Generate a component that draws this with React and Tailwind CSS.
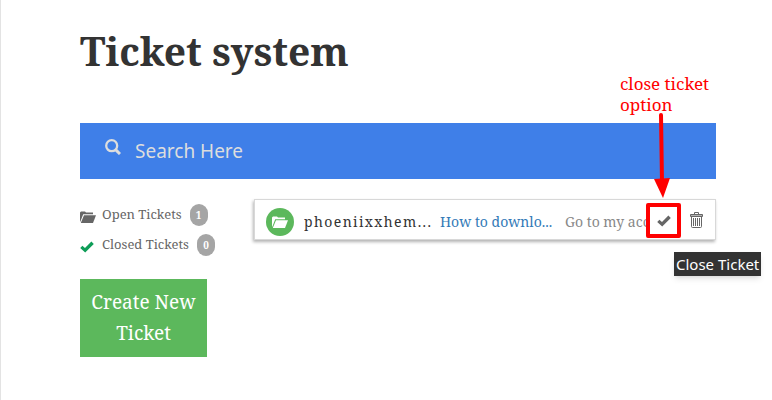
function FolderOpen({ className }) {
  return (
    <svg className={className} viewBox="0 0 16 12" fill="currentColor" aria-hidden="true">
      <path d="M0 11V1.5L1 0.5H5L6 1.5H13V3.2H3.2L0.6 10Z" />
      <path d="M4 4.2H16L13 12H0.8Z" />
    </svg>
  );
}

function Check({ className }) {
  return (
    <svg className={className} viewBox="0 0 14 12" fill="currentColor" aria-hidden="true">
      <path d="M0.2 7L2.4 4.8L5 7.1L11.4 0.6L13.8 3L5.2 11.6Z" />
    </svg>
  );
}

function Trash({ className }) {
  return (
    <svg className={className} viewBox="0 0 13 16" fill="none" stroke="currentColor" aria-hidden="true">
      <path d="M4.5 2V0.5H8.5V2" />
      <path d="M0.5 4.5V2.5H12.5V4.5Z" fill="currentColor" fillOpacity="0.5" />
      <path d="M1.5 5V14.5Q1.5 15.5 2.5 15.5H10.5Q11.5 15.5 11.5 14.5V5" />
      <path d="M3.5 6V14M5.5 6V14M7.5 6V14M9.5 6V14" />
    </svg>
  );
}

function Search({ className }) {
  return (
    <svg className={className} viewBox="0 0 16 16" fill="none" stroke="currentColor" aria-hidden="true">
      <circle cx="6.7" cy="6.7" r="5.5" strokeWidth="2.3" />
      <path d="M10.6 10.6L15 15" strokeWidth="3" />
    </svg>
  );
}

function Filter({ icon, label, count }) {
  return (
    <li className="flex h-[22px] items-center text-[13px] text-[#666]">
      <span className="w-[22px] pt-1">{icon}</span>
      <span>{label}</span>
      <span className="ml-2 flex h-[22px] w-[18px] items-center justify-center rounded-full bg-[#a5a5a5] text-[10px] font-bold text-white">
        {count}
      </span>
    </li>
  );
}

export default function App() {
  return (
    <main className="min-h-screen border-l border-[#e3e3e3] bg-white pt-[25px] pr-14 pb-10 pl-[79px] font-['Noto_Serif','DejaVu_Serif_Condensed','DejaVu_Serif',serif]">
      <h1 className="text-[39px] leading-[52px] font-bold text-[#333]">Ticket system</h1>

      <label className="mt-[46px] flex h-14 items-center bg-[#3f7fe8] pl-[25px] text-[#ddd]">
        <Search className="mb-2 size-4 shrink-0" />
        <input
          type="search"
          aria-label="Search tickets"
          placeholder="Search Here"
          className="ml-[14px] min-w-0 flex-1 bg-transparent font-['Noto_Sans',sans-serif] text-[19px] leading-7 outline-none placeholder:text-[#ddd]"
        />
      </label>

      <div className="mt-5 flex items-start">
        <aside className="w-[174px] shrink-0 pt-[5px]">
          <ul className="flex flex-col gap-2">
            <Filter icon={<FolderOpen className="h-3 w-4" />} label="Open Tickets" count="1" />
            <Filter icon={<Check className="h-3 w-[14px] text-[#0f9d58]" />} label="Closed Tickets" count="0" />
          </ul>
          <button type="button" className="mt-[23px] w-[127px] bg-[#5cb85c] py-2 text-[19px] leading-[31px] text-white">
            Create New Ticket
          </button>
        </aside>

        <article className="flex h-[41px] min-w-0 flex-1 items-center border border-[#d8d8d8] pt-1 pr-3 pl-[11px] shadow-[-1px_2px_3px_rgba(0,0,0,0.3)]">
          <span className="flex size-7 shrink-0 items-center justify-center rounded-full bg-[#5cb85c] text-white">
            <FolderOpen className="h-3 w-4" />
          </span>
          <span className="ml-[10px] w-[128px] shrink-0 overflow-hidden text-[14px] tracking-widest whitespace-nowrap text-[#333]">phoeniixxhem...</span>
          <a href="#ticket" className="ml-2 w-[116px] shrink-0 overflow-hidden text-[14px] whitespace-nowrap text-[#337ab7]">
            How to downlo...
          </a>
          <span className="ml-[9px] min-w-0 flex-1 overflow-hidden text-[14px] whitespace-nowrap text-[#888]">Go to my acc</span>
          <div className="relative -mt-0.5 shrink-0">
            <button
              type="button"
              aria-label="Close Ticket"
              className="flex h-[35px] w-[35px] items-center justify-center rounded-xs border-4 border-[#f00] text-[#666]"
            >
              <Check className="h-3 w-[14px]" />
            </button>
            <svg className="absolute bottom-full left-[7px] mb-[5px] h-[85px] w-[18px]" viewBox="0 0 18 85" aria-hidden="true">
              <path d="M8 2L9 70" stroke="#f00" strokeWidth="4" strokeLinecap="round" />
              <path d="M1 66L17 65L10 85Z" fill="#f00" />
            </svg>
            <p className="absolute bottom-full -left-[26px] mb-[88px] w-[100px] text-[17px] leading-[21px] text-[#f00]">
              close ticket option
            </p>
            <span
              role="tooltip"
              className="absolute top-full left-7 mt-[14px] bg-[#333] px-0.5 font-['Noto_Sans',sans-serif] text-[15px] leading-6 whitespace-nowrap text-white shadow-md"
            >
              Close Ticket
            </span>
          </div>
          <button type="button" aria-label="Delete Ticket" className="-mt-1 ml-[9px] text-[#666]">
            <Trash className="h-4 w-[13px]" />
          </button>
        </article>
      </div>
    </main>
  );
}
